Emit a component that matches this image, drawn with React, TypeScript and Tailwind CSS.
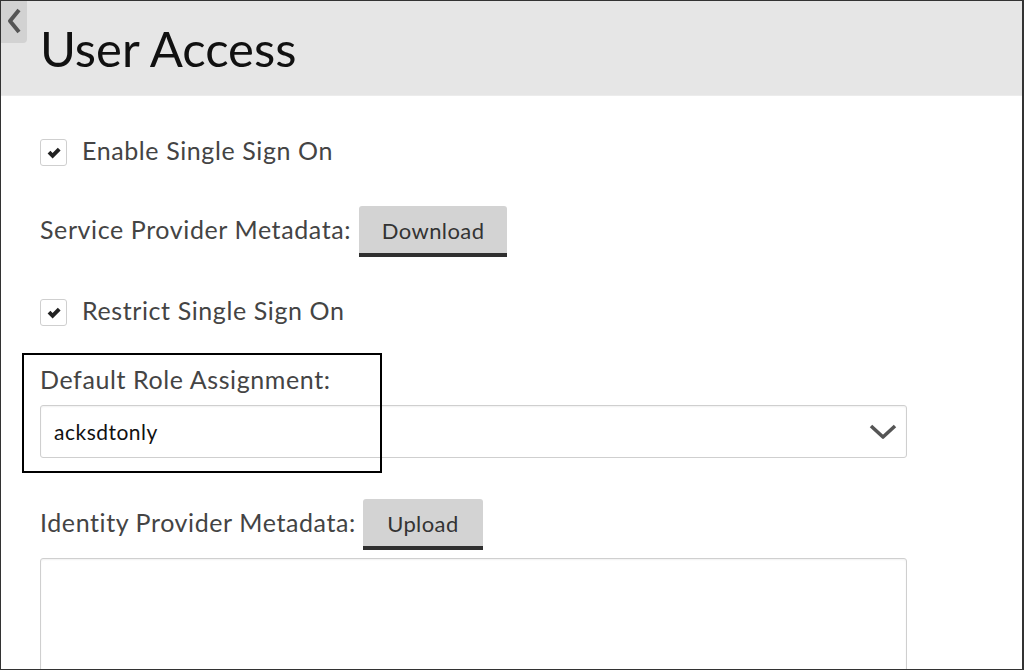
function CheckRow({ label }: { label: string }) {
  return (
    <label className="flex items-center gap-[15px] h-[27px]">
      <span className="w-[27px] h-[27px] shrink-0 rounded-[3px] border border-[#cfcfcf] bg-white flex items-center justify-center">
        <svg viewBox="0 0 16 16" className="w-[16px] h-[16px]" fill="#222">
          <path d="M1.6 8.4 L4.4 5.8 L6.6 8.1 L11.8 2.8 L14.6 5.4 L6.6 13.4 Z" />
        </svg>
      </span>
      <span className="text-[25px] leading-[30px] tracking-[0.6px] text-[#444] pb-[6px]">{label}</span>
    </label>
  );
}

function GrayButton({ label, width }: { label: string; width: string }) {
  return (
    <button
      className={`${width} h-[51px] shrink-0 bg-[#d3d3d3] rounded-t-[3px] border-b-[4px] border-[#2f2f2f] text-[22px] tracking-[0.4px] text-[#333] flex items-center justify-center pt-[2px]`}
    >
      {label}
    </button>
  );
}

export default function App() {
  return (
    <div
      className="w-[1024px] h-[670px] overflow-hidden bg-white border-t border-l border-b border-r-2 border-[#333] flex flex-col"
      style={{ fontFamily: "Lato, 'Noto Sans', sans-serif" }}
    >
      {/* Header */}
      <div className="relative h-[95px] shrink-0 bg-[#e6e6e6] border-b border-[#ececec] pl-[39px] pt-[15px]">
        <div className="absolute left-0 top-0 w-[26px] h-[42px] bg-[#d2d2d2] rounded-br-[4px] flex justify-center pt-[7px]">
          <svg viewBox="0 0 16 26" className="w-[16px] h-[26px]" fill="none" stroke="#555" strokeWidth={4} strokeLinejoin="round">
            <polyline points="13,2 4,13 13,24" />
          </svg>
        </div>
        <h1 className="text-[49px] leading-[64px] text-[#111]">User Access</h1>
      </div>

      {/* Body */}
      <div className="relative flex flex-col pl-[39px] pr-[115px]">
        <div className="mt-[43px]">
          <CheckRow label="Enable Single Sign On" />
        </div>

        <div className="mt-[40px] flex items-center gap-[8px]">
          <span className="text-[25px] leading-[30px] tracking-[0.6px] text-[#444] pb-[6px]">Service Provider Metadata:</span>
          <GrayButton label="Download" width="w-[148px]" />
        </div>

        <div className="mt-[42px]">
          <CheckRow label="Restrict Single Sign On" />
        </div>

        <div className="mt-[38px] text-[25px] leading-[30px] tracking-[0.6px] text-[#444] mb-[1px]">Default Role Assignment:</div>
        <div className="mt-[10px] h-[53px] border border-[#cfcfcf] rounded-[3px] shadow-[inset_0_1px_2px_rgba(0,0,0,0.06)] flex items-center justify-between pl-[13px] pr-[8px]">
          <span className="text-[21px] tracking-[0.5px] text-[#111]">acksdtonly</span>
          <svg viewBox="0 0 28 16" className="w-[28px] h-[16px] mr-[1px]" fill="none" stroke="#555" strokeWidth={3.6} strokeLinejoin="round">
            <polyline points="2,2 14,13 26,2" />
          </svg>
        </div>

        {/* annotation box */}
        <div className="absolute left-[21px] top-[257px] w-[360px] h-[120px] border-2 border-black pointer-events-none" />

        <div className="mt-[41px] flex items-center gap-[7px]">
          <span className="text-[25px] leading-[30px] tracking-[0.6px] text-[#444] pb-[6px]">Identity Provider Metadata:</span>
          <GrayButton label="Upload" width="w-[120px]" />
        </div>

        <div className="mt-[8px] h-[140px] border border-[#cfcfcf] rounded-[3px] shadow-[inset_0_1px_2px_rgba(0,0,0,0.06)]" />
      </div>
    </div>
  );
}
